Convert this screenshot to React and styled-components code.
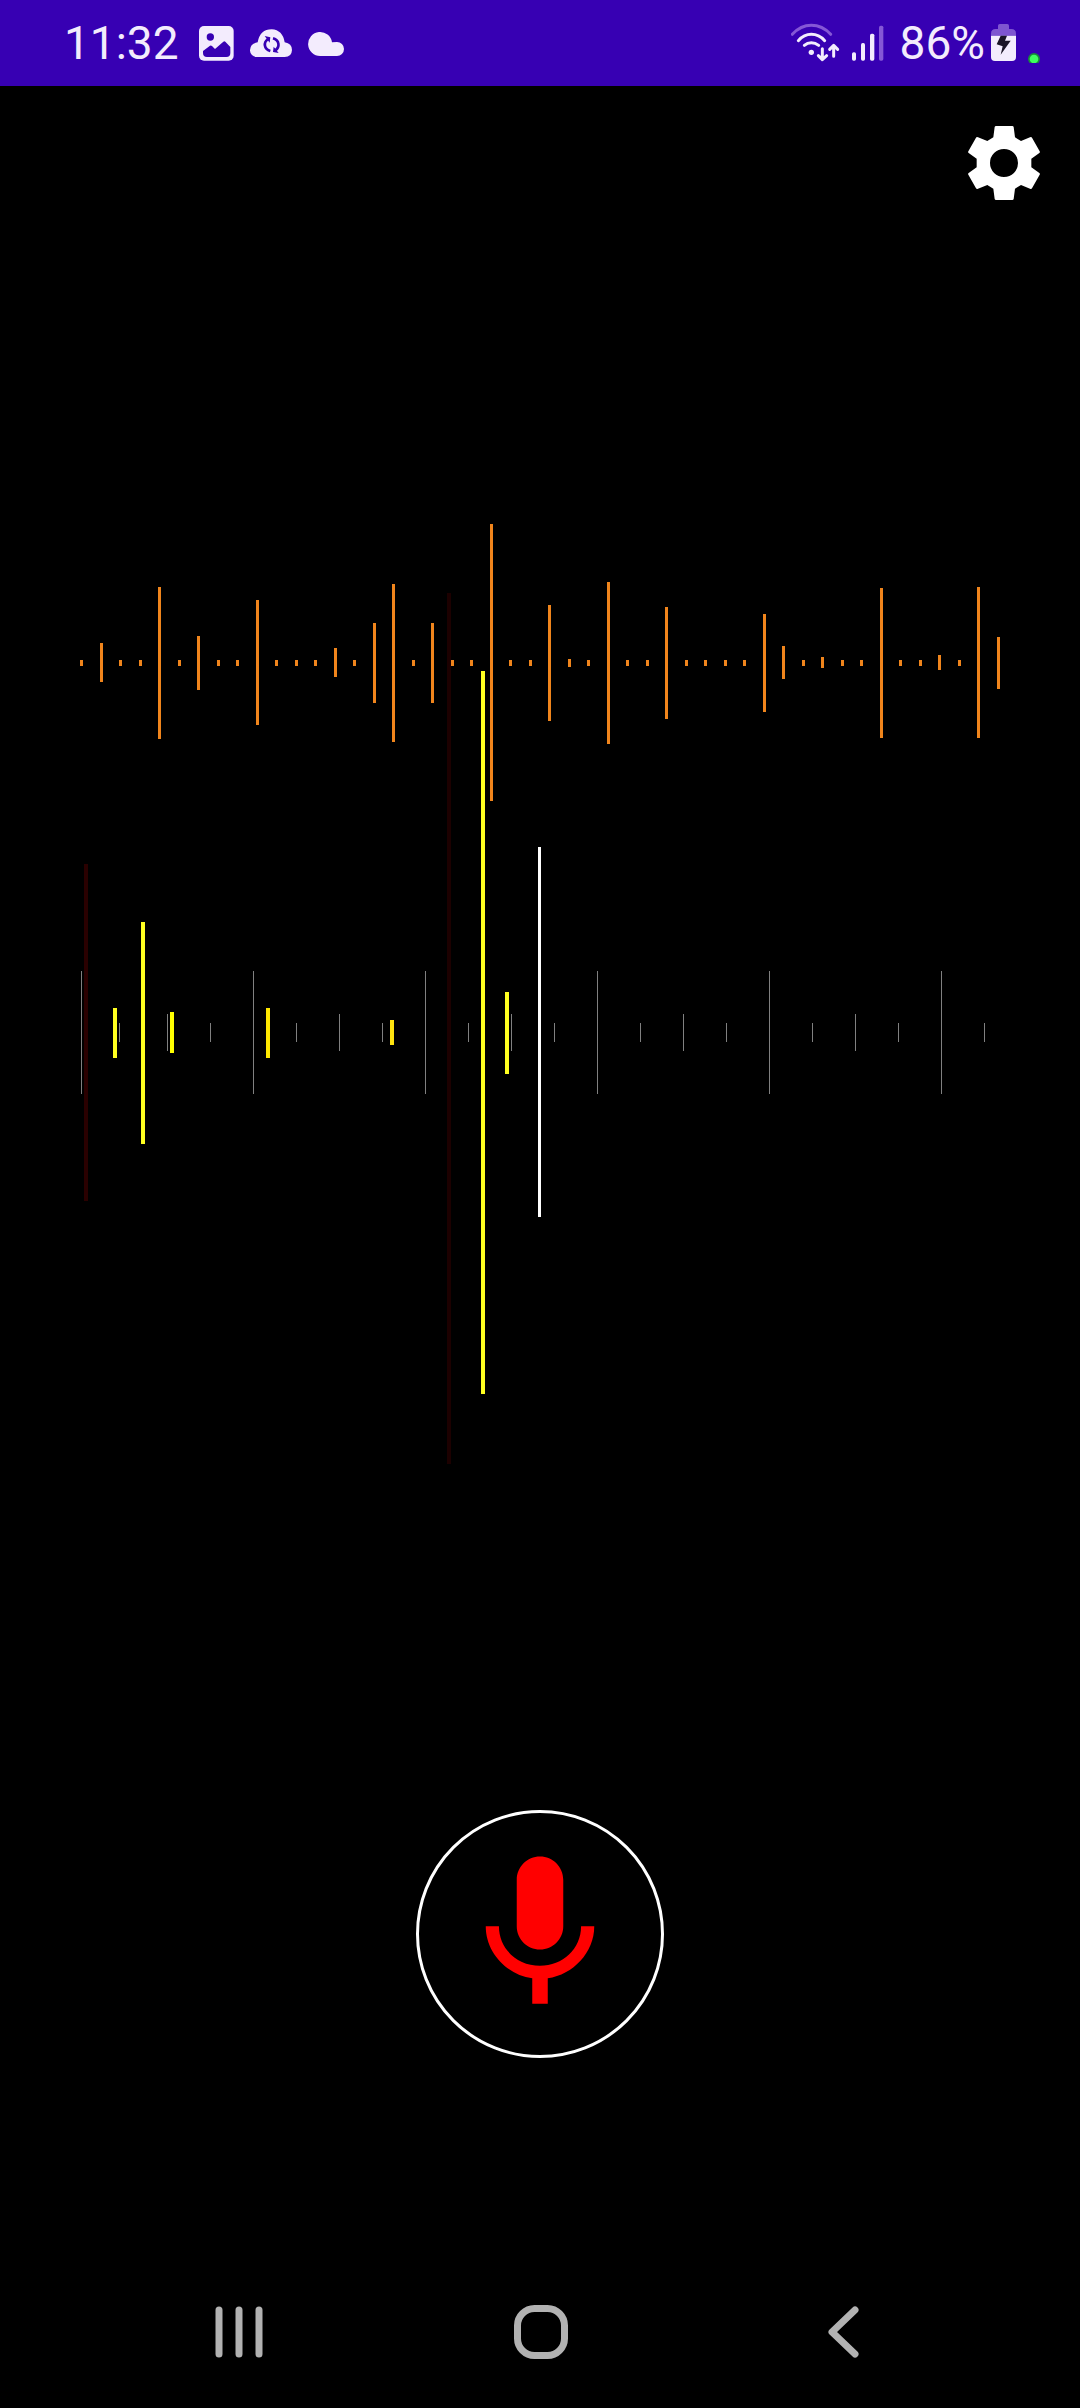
import React from "react";
import styled, { createGlobalStyle } from "styled-components";

const GlobalStyle = createGlobalStyle`
  *, *::before, *::after { box-sizing: border-box; }
  body {
    margin: 0;
    background: #000;
    font-family: Roboto, "Noto Sans", sans-serif;
  }
`;

const Screen = styled.div`
  display: flex;
  flex-direction: column;
  min-height: 100vh;
  background: #000;
`;

/* ---------- status bar ---------- */

const StatusBar = styled.header`
  display: flex;
  align-items: center;
  justify-content: space-between;
  height: 86px;
  padding: 0 40px 0 64px;
  background: #3700b3;
  color: #f3ecfd;
`;

const StatusGroup = styled.div`
  display: flex;
  align-items: center;
  gap: ${({ $gap }) => $gap}px;
`;

const StatusText = styled.span`
  font-size: 46px;
  line-height: 56px;
`;

const StatusIcon = styled.svg`
  display: block;
  width: ${({ $width }) => $width}px;
  height: 40px;
`;

function ImageIcon() {
  return (
    <StatusIcon $width={35} viewBox="474 69 105 120" role="img" aria-label="Picture saved">
      <rect x="474" y="78" width="104" height="104" rx="15" fill="#f3ecfd" />
      <circle cx="508" cy="111" r="11" fill="#3700b3" />
      <path
        d="M486 153 L507 137 Q510 135 513 138 L522 147 L547 125 Q550 122 553 125 L568 141 V159 Q568 171 556 171 H498 Q486 171 486 159 Z"
        fill="#3700b3"
      />
    </StatusIcon>
  );
}

function CloudSyncIcon() {
  return (
    <StatusIcon $width={42} viewBox="627 69 126 120" role="img" aria-label="Cloud sync">
      <path
        d="M648 171 A20 20 0 0 1 627 150 Q628 130 650 127 Q657 88 692 88 Q725 90 731 127 Q753 131 753 150 Q752 171 731 171 Z"
        fill="#f3ecfd"
      />
      <g fill="none" stroke="#3700b3" strokeWidth="8">
        <path d="M688 153 C668 147 667 127 681 117" />
        <path d="M696 115 C716 121 717 141 703 151" />
      </g>
      <path d="M671 108 L688 112 L686 128 Z M713 159 L696 156 L698 140 Z" fill="#3700b3" />
    </StatusIcon>
  );
}

function CloudIcon() {
  return (
    <StatusIcon $width={36} viewBox="804 69 108 120" role="img" aria-label="Weather">
      <path
        d="M841 168 A36 36 0 1 1 876 127 Q880 126 891 126 A21 21 0 0 1 891 168 Z"
        fill="#f3ecfd"
      />
    </StatusIcon>
  );
}

function WifiIcon() {
  return (
    <StatusIcon $width={49} viewBox="90 69 147 120" role="img" aria-label="Wi-Fi">
      <g fill="none" stroke="#f3ecfd" strokeWidth="9" strokeLinecap="round" strokeLinejoin="round">
        <path d="M94 103 Q119 76 151 76 Q184 76 209 103" stroke="#8557d6" />
        <path d="M112 122 Q129 103 151 103 Q174 103 191 122" />
        <path d="M130 136 Q139 128 151 128 Q163 128 173 136" />
        <path d="M184 146 V178 M172 167 L184 179 L197 167" />
        <path d="M218 169 V137 M206 148 L218 136 L230 148" />
      </g>
      <circle cx="151" cy="157" r="8" fill="#f3ecfd" />
    </StatusIcon>
  );
}

function SignalIcon() {
  return (
    <StatusIcon $width={32} viewBox="270 69 96 120" role="img" aria-label="Mobile signal">
      <g fill="#f3ecfd">
        <rect x="270" y="157" width="12" height="25" rx="5" />
        <rect x="297" y="129" width="12" height="53" rx="5" />
        <rect x="324" y="101" width="13" height="81" rx="5" />
        <rect x="351" y="77" width="13" height="105" rx="5" fill="#8557d6" />
      </g>
    </StatusIcon>
  );
}

function BatteryIcon() {
  return (
    <StatusIcon $width={25} viewBox="693 69 75 120" role="img" aria-label="Charging">
      <path
        d="M693 107 V101 Q693 87 707 87 H714 V77 Q714 72 719 72 H742 Q747 72 747 77 V87 H754 Q768 87 768 101 V107 Z"
        fill="#7e55d0"
      />
      <path d="M693 107 H768 V171 Q768 183 756 183 H705 Q693 183 693 171 Z" fill="#f3ecfd" />
      <path d="M722 107 H741 L735 122 H752 L722 164 L728 139 L710 133 Z" fill="#1a1426" />
    </StatusIcon>
  );
}

function PrivacyDot() {
  return (
    <StatusIcon $width={12} viewBox="804 69 36 120" role="img" aria-label="Microphone in use">
      <circle cx="822" cy="177" r="18" fill="#178a3c" />
      <circle cx="822" cy="177" r="13" fill="#3dff5e" />
    </StatusIcon>
  );
}

/* ---------- app ---------- */

const Toolbar = styled.div`
  display: flex;
  justify-content: flex-end;
  padding: 40px 40px 0;
`;

const IconButton = styled.button`
  display: grid;
  place-items: center;
  padding: 0;
  border: 0;
  background: none;
  cursor: pointer;
`;

const GearIcon = styled.svg`
  display: block;
  width: 72px;
  height: 74px;
`;

const Main = styled.main`
  flex: 1;
  display: flex;
  flex-direction: column;
  align-items: center;
  padding-top: 300px;
`;

const Chart = styled.svg`
  display: block;
  width: 100%;
  height: auto;
  shape-rendering: crispEdges;
`;

const RecordButton = styled(IconButton)`
  width: 248px;
  height: 248px;
  margin: 330px 0 0;
  border: 3px solid #fff;
  border-radius: 50%;
`;

const MicIcon = styled.svg`
  display: block;
  width: 186px;
  height: 186px;
  fill: #f00;
`;

const NavBar = styled.nav`
  display: grid;
  grid-template-columns: repeat(3, 1fr);
  height: 152px;
  padding: 0 86px 0 88px;
`;

const NavIcon = styled.svg`
  display: block;
  width: 60px;
  height: 60px;
  fill: none;
  stroke: #b2b2b2;
  stroke-width: 7px;
  stroke-linecap: round;
  stroke-linejoin: round;
`;

/* Loud samples of the input signal: index -> [top, bottom]. The rest are silent. */
const SAMPLE_COUNT = 48;
const PEAKS = {
  1: [643, 682],
  4: [587, 739],
  6: [636, 690],
  9: [600, 725],
  13: [648, 677],
  15: [623, 703],
  16: [584, 742],
  18: [623, 703],
  21: [524, 801],
  24: [605, 721],
  25: [659, 667],
  27: [582, 744],
  30: [607, 719],
  35: [614, 712],
  36: [646, 679],
  38: [657, 668],
  41: [588, 738],
  44: [655, 670],
  46: [587, 738],
  47: [637, 689],
};

const TICKS = Array.from({ length: 22 }, (_, i) => {
  const x = i === 1 ? 119 : 81 + 43 * i;
  if (i % 4 === 0) return [x, 971, 123];
  if (i % 2 === 0) return [x, 1014, 37];
  return [x, 1023, 19];
});

/* [x, top, bottom, colour] */
const MARKS = [
  [84, 864, 1201, "#2a0000"],
  [447, 593, 1464, "#1c0000"],
  [113, 1008, 1058, "#ffff20"],
  [141, 922, 1144, "#ffff20"],
  [170, 1012, 1053, "#ffff00"],
  [266, 1008, 1058, "#ffe800"],
  [390, 1020, 1045, "#ffe30f"],
  [481, 671, 1394, "#ffff20"],
  [505, 992, 1074, "#ffff20"],
];

function SoundChart() {
  return (
    <Chart viewBox="0 500 1080 980" role="img" aria-label="Sound level over time">
      <g fill="#f0851c">
        {Array.from({ length: SAMPLE_COUNT }, (_, i) => {
          const [top, bottom] = PEAKS[i] || [660, 666];
          return (
            <rect key={i} x={80 + Math.ceil(i * 19.5)} y={top} width="3" height={bottom - top} />
          );
        })}
      </g>
      <g fill="#808080">
        {TICKS.map(([x, y, height]) => (
          <rect key={x} x={x} y={y} width="1" height={height} />
        ))}
      </g>
      {MARKS.map(([x, top, bottom, colour]) => (
        <rect key={x} x={x} y={top} width="4" height={bottom - top} fill={colour} />
      ))}
      <rect x="538" y="847" width="3" height="370" fill="#fff" />
    </Chart>
  );
}

export default function App() {
  return (
    <Screen>
      <GlobalStyle />
      <StatusBar>
        <StatusGroup $gap={20}>
          <StatusText>11:32</StatusText>
          <StatusGroup $gap={16}>
            <ImageIcon />
            <CloudSyncIcon />
            <CloudIcon />
          </StatusGroup>
        </StatusGroup>
        <StatusGroup $gap={16}>
          <StatusGroup $gap={12}>
            <WifiIcon />
            <SignalIcon />
          </StatusGroup>
          <StatusGroup $gap={12}>
            <StatusGroup $gap={6}>
              <StatusText>86%</StatusText>
              <BatteryIcon />
            </StatusGroup>
            <PrivacyDot />
          </StatusGroup>
        </StatusGroup>
      </StatusBar>

      <Toolbar>
        <IconButton type="button" aria-label="Settings">
          <GearIcon viewBox="621 378 216 222">
            <path
              fillRule="evenodd"
              fill="#fff"
              d="M705 378 H754 Q757 378 758 381 L762 412 L780 423 L807 412 Q811 410 813 413 L836 454 Q838 457 835 459 L811 476 V502 L835 519 Q838 521 836 524 L813 565 Q811 568 807 566 L780 555 L762 566 L758 597 Q757 600 754 600 H705 Q702 600 701 597 L697 566 L679 555 L651 566 Q647 568 645 565 L622 524 Q620 521 623 519 L647 502 V476 L623 459 Q620 457 622 454 L645 413 Q647 410 651 412 L679 423 L697 412 L701 381 Q702 378 705 378 Z M729 447 A42 42 0 1 0 729 531 A42 42 0 1 0 729 447 Z"
            />
          </GearIcon>
        </IconButton>
      </Toolbar>

      <Main>
        <SoundChart />
        <RecordButton type="button" aria-label="Record">
          <MicIcon viewBox="0 0 24 24">
            <path d="M12 14c1.66 0 3-1.34 3-3V5c0-1.66-1.34-3-3-3S9 3.34 9 5v6c0 1.66 1.34 3 3 3zM17.3 11c0 2.93-2.37 5.1-5.3 5.1S6.7 13.93 6.7 11H5c0 3.41 2.72 6.23 6 6.72V21h2v-3.28c3.28-.49 6-3.31 6-6.72h-1.7z" />
          </MicIcon>
        </RecordButton>
      </Main>

      <NavBar aria-label="System navigation">
        <IconButton type="button" aria-label="Recent apps">
          <NavIcon viewBox="0 0 60 60">
            <path d="M10 8 V52 M30 8 V52 M50 8 V52" />
          </NavIcon>
        </IconButton>
        <IconButton type="button" aria-label="Home">
          <NavIcon viewBox="0 0 60 60">
            <rect x="6.5" y="6.5" width="47" height="47" rx="17" />
          </NavIcon>
        </IconButton>
        <IconButton type="button" aria-label="Back">
          <NavIcon viewBox="0 0 60 60">
            <path d="M42 8 L19 30 L42 52" />
          </NavIcon>
        </IconButton>
      </NavBar>
    </Screen>
  );
}
